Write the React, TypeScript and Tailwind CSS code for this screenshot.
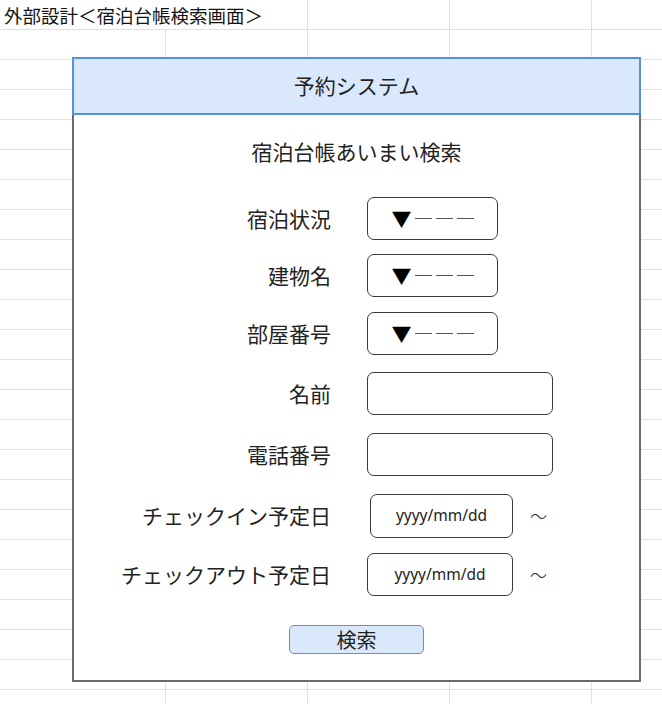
import React from 'react';

const ROWS = 24;
const COLS = 5;

const fields = [
  { id: 'status', label: '宿泊状況', kind: 'select', mt: 'mt-[32px]' },
  { id: 'building', label: '建物名', kind: 'select', mt: 'mt-[14px]' },
  { id: 'room', label: '部屋番号', kind: 'select', mt: 'mt-[15px]' },
  { id: 'name', label: '名前', kind: 'text', mt: 'mt-[17px]' },
  { id: 'tel', label: '電話番号', kind: 'text', mt: 'mt-[18px]' },
  { id: 'checkin', label: 'チェックイン予定日', kind: 'date-in', mt: 'mt-[18px]' },
  { id: 'checkout', label: 'チェックアウト予定日', kind: 'date-out', mt: 'mt-[15px]' },
];

function Sheet() {
  const cells = [];
  for (let r = 0; r < ROWS; r++) {
    if (r === 0) {
      // title overflows into column B, so that border is hidden
      cells.push(
        <div key="title" className="col-span-2 border-r border-b border-[#e0e0e0] flex items-end pl-[4px] pb-[1px] text-[18.5px] leading-[26px] text-[#111] whitespace-nowrap">
          外部設計＜宿泊台帳検索画面＞
        </div>
      );
      for (let c = 2; c < COLS; c++) {
        cells.push(<div key={`0-${c}`} className="border-r border-b border-[#e0e0e0]" />);
      }
      continue;
    }
    for (let c = 0; c < COLS; c++) {
      cells.push(<div key={`${r}-${c}`} className="border-r border-b border-[#e0e0e0]" />);
    }
  }
  return (
    <div className="grid grid-cols-[166px_142px_142px_142px_142px] auto-rows-[30px]">
      {cells}
    </div>
  );
}

function SelectBox() {
  return (
    <div className="w-[131px] h-[43px] border-[1.5px] border-[#3a3a3a] rounded-[7px] flex items-center justify-center">
      <span className="text-[20px] leading-none text-black">▼</span>
      <span className="ml-[3px] flex gap-[4px]">
        <span className="w-[17px] h-[1.5px] bg-[#555]" />
        <span className="w-[17px] h-[1.5px] bg-[#555]" />
        <span className="w-[17px] h-[1.5px] bg-[#555]" />
      </span>
    </div>
  );
}

function Field({ kind }: { kind: string }) {
  if (kind === 'select') return <SelectBox />;
  if (kind === 'text') {
    return <div className="w-[186px] h-[43px] border-[1.5px] border-[#3a3a3a] rounded-[7px]" />;
  }
  return (
    <div className={`flex items-center ${kind === 'date-in' ? 'ml-[3px]' : ''}`}>
      <div
        className={`${kind === 'date-in' ? 'w-[143px] h-[44px]' : 'w-[146px] h-[43px]'} border-[1.5px] border-[#3a3a3a] rounded-[7px] flex items-center justify-center font-['Noto_Sans',sans-serif] text-[15.5px] text-[#222]`}
      >
        yyyy/mm/dd
      </div>
      <span className="ml-[17px] text-[17px] font-light text-[#333]">～</span>
    </div>
  );
}

export default function App() {
  return (
    <div className="relative w-[662px] h-[704px] overflow-hidden bg-white font-['Noto_Sans_CJK_JP','Noto_Sans',sans-serif]">
      <Sheet />

      {/* mockup shape floating over the sheet */}
      <div className="absolute left-[72px] top-[57px] w-[569px] flex flex-col">
        <div className="h-[58px] bg-[#dae8fc] border-2 border-[#5591dc] flex items-center justify-center text-[21px] text-[#222]">
          予約システム
        </div>
        <div className="h-[567px] bg-white border-2 border-t-0 border-[#6b6b6b] flex flex-col pt-[22px]">
          <div className="text-center text-[21px] leading-[28px] text-[#222]">宿泊台帳あいまい検索</div>

          {fields.map((f) => (
            <div key={f.id} className={`${f.mt} flex items-center`}>
              <div className="w-[257px] text-right text-[21px] text-[#222] whitespace-nowrap">{f.label}</div>
              <div className="ml-[36px]">
                <Field kind={f.kind} />
              </div>
            </div>
          ))}

          <div className="mt-[29px] flex justify-center">
            <div className="w-[135px] h-[29px] bg-[#dae8fc] border-[1.5px] border-[#6c8ebf] rounded-[5px] flex items-center justify-center text-[20px] leading-none text-[#222]">
              検索
            </div>
          </div>
        </div>
      </div>
    </div>
  );
}
